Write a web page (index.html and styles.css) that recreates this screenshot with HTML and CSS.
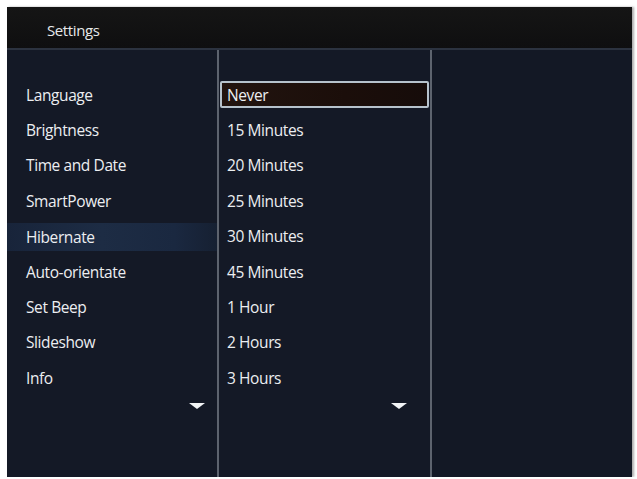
FILE: index.html
```html
<!DOCTYPE html>
<html>
<head>
<meta charset="utf-8">
<link rel="stylesheet" href="styles.css">
</head>
<body>
<div class="frame">
  <div class="header"><span class="title">Settings</span></div>
  <div class="panes">
    <div class="pane pane-menu">
      <ul class="list">
        <li class="row">Language</li>
        <li class="row">Brightness</li>
        <li class="row">Time and Date</li>
        <li class="row">SmartPower</li>
        <li class="row row-hl">Hibernate</li>
        <li class="row">Auto-orientate</li>
        <li class="row">Set Beep</li>
        <li class="row">Slideshow</li>
        <li class="row">Info</li>
      </ul>
      <div class="more more-menu"><span class="tri"></span></div>
    </div>
    <div class="pane pane-opts">
      <ul class="list">
        <li class="row row-sel"><span class="sel-box">Never</span></li>
        <li class="row">15 Minutes</li>
        <li class="row">20 Minutes</li>
        <li class="row">25 Minutes</li>
        <li class="row">30 Minutes</li>
        <li class="row">45 Minutes</li>
        <li class="row">1 Hour</li>
        <li class="row">2 Hours</li>
        <li class="row">3 Hours</li>
      </ul>
      <div class="more more-opts"><span class="tri"></span></div>
    </div>
    <div class="pane pane-empty"></div>
  </div>
</div>
</body>
</html>
```
FILE: styles.css
```css
html, body {
  margin: 0;
  padding: 0;
  background: #ffffff;
}
body {
  padding: 7px 0 0 7px;
  font-family: "Open Sans", "Liberation Sans", sans-serif;
}
.frame {
  width: 625px;
  height: 470px;
  display: flex;
  flex-direction: column;
  background: #141926;
  box-shadow: 2px 0 2px rgba(90, 90, 90, 0.5);
}
.header {
  height: 41px;
  flex: none;
  background: linear-gradient(#151515, #0f0f10);
  display: flex;
  align-items: center;
  padding-left: 40px;
  box-sizing: border-box;
}
.title {
  color: #e6e8ea;
  font-size: 15px;
  letter-spacing: -0.4px;
  padding-top: 4px;
}
.panes {
  flex: 1;
  display: grid;
  grid-template-columns: 212px 213px 200px;
  border-top: 2px solid #2c3340;
}
.pane {
  display: flex;
  flex-direction: column;
  padding-top: 27px;
}
.pane-menu {
  border-right: 2px solid #5d636e;
}
.pane-opts {
  border-right: 2px solid #5d636e;
}
.pane-empty {
  background: #131825;
}
.list {
  list-style: none;
  margin: 0;
  padding: 0;
}
.row {
  height: 35.4px;
  display: flex;
  align-items: center;
  color: #eceef1;
  font-size: 15.5px;
  letter-spacing: -0.4px;
  padding-left: 19px;
  box-sizing: border-box;
}
.pane-opts .row {
  padding-left: 8px;
}
.row-hl {
  background: linear-gradient(90deg, #18243a 0%, #1d2c44 45%, #1a2840 80%, #162032 100%);
  height: 28px;
  margin: 4px 0 3.4px;
}
.pane-opts .row-sel {
  padding: 0 1px;
}
.sel-box {
  flex: 1;
  height: 27px;
  box-sizing: border-box;
  border: 2px solid #b6c2cc;
  border-radius: 2px;
  background: linear-gradient(90deg, #22140f, #1b0e0a 60%, #160c0a);
  display: flex;
  align-items: center;
  padding-left: 5px;
}
.more {
  display: flex;
  justify-content: flex-end;
  padding-top: 7px;
}
.more-menu {
  padding-right: 12px;
}
.more-opts {
  padding-right: 23px;
}
.tri {
  width: 0;
  height: 0;
  border-left: 8px solid transparent;
  border-right: 8px solid transparent;
  border-top: 6px solid #f2f4f6;
}
```
